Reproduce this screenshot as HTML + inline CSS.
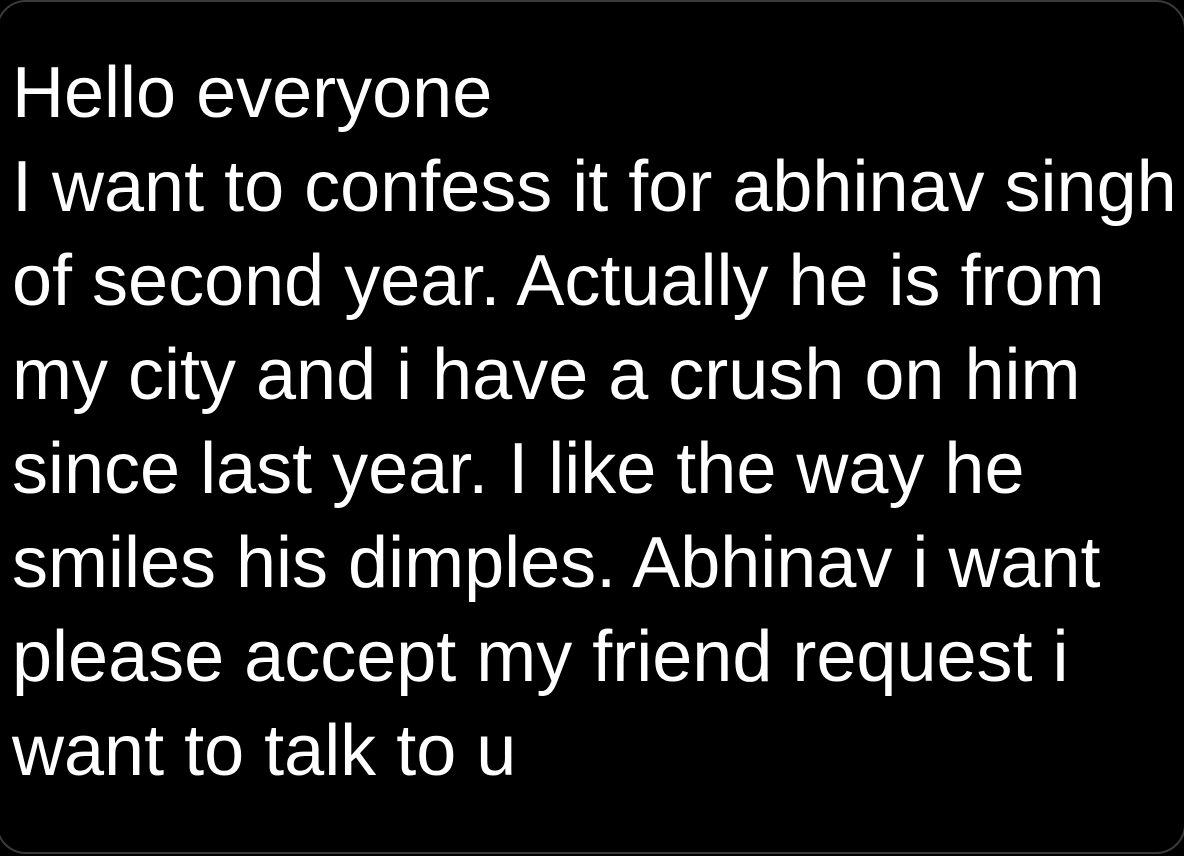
<!DOCTYPE html>
<html><head><meta charset="utf-8"><style>
html,body{margin:0;padding:0;background:#000;}
body{width:1184px;height:856px;overflow:hidden;position:relative;}
.box{position:absolute;left:-4px;top:0;width:1186px;height:850px;border:2px solid #3a3a3a;border-radius:30px;background:#000;}
.t{position:absolute;left:12px;top:46px;font-family:"Liberation Sans",sans-serif;font-size:72px;line-height:94px;color:#fff;white-space:nowrap;letter-spacing:0;}
</style></head><body>
<div class="box"></div>
<div class="t">Hello everyone<br>I want to confess it for abhinav singh<br>of second year. Actually he is from<br>my city and i have a crush on him<br>since last year. I like the way he<br>smiles his dimples. Abhinav i want<br>please accept my friend request i<br>want to talk to u</div>
</body></html>
